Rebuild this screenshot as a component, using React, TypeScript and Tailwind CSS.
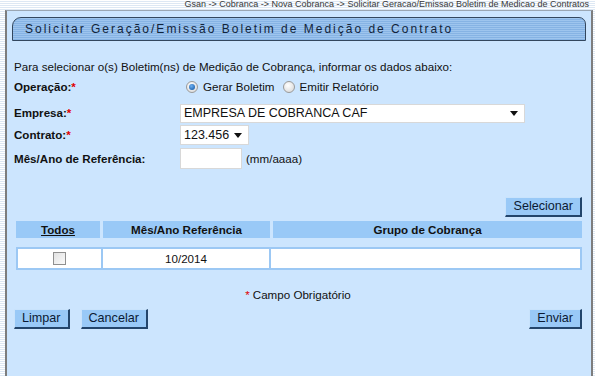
import React from "react";

const font = "font-['Liberation_Sans',Arial,sans-serif]";

const Req = () => <span className="text-[#e00000]">*</span>;

const Btn = ({ label, className = "" }: { label: string; className?: string }) => (
  <button
    className={`h-[20px] px-[7px] bg-[#99c9f7] text-[12.6px] text-[#0b1a33] leading-none border border-t-[#c9e3fc] border-l-[#c9e3fc] border-r-2 border-b-2 border-r-[#23456b] border-b-[#23456b] ${className}`}
  >
    {label}
  </button>
);

const Radio = ({ checked }: { checked?: boolean }) => (
  <span className="w-[12px] h-[12px] rounded-full border border-[#9a9a9a] bg-[radial-gradient(circle_at_40%_35%,#ffffff,#d4d4d4)] flex items-center justify-center">
    {checked && <span className="w-[6px] h-[6px] rounded-full bg-[radial-gradient(circle_at_40%_35%,#6fb0f0,#0a4f9e)]" />}
  </span>
);

const Caret = () => (
  <svg width="8" height="5" viewBox="0 0 8 5">
    <path d="M0 0h8L4 5z" fill="#111" />
  </svg>
);

export default function App() {
  return (
    <div
      className={`${font} w-[595px] h-[376px] overflow-hidden bg-[repeating-linear-gradient(180deg,#ffffff_0px,#ffffff_1px,#dde8f4_1px,#dde8f4_2px)] text-[#111]`}
    >
      <div className="h-[10px] flex justify-end items-center pr-[6px] text-[9px] text-[#3a3a3a]">
        Gsan -&gt; Cobranca -&gt; Nova Cobranca -&gt; Solicitar Geracao/Emissao Boletim de Medicao de Contratos
      </div>
      <div className="ml-[5px] w-[588px] h-[366px] bg-[#cce5fe] border-l-2 border-r-2 border-t border-l-[#7d7d7d] border-r-[#7d7d7d] border-t-[#9aa6b3] pt-[6px] px-[5px]">
        <div className="h-[24px] border border-[#33475e] rounded-tl-[9px] rounded-tr-[7px] bg-[repeating-linear-gradient(180deg,#9ec5ee_0px,#9ec5ee_1px,#86b3e4_1px,#86b3e4_2px)] flex items-center pl-[12px] text-[12px] tracking-[2px] text-[#12243a]">
          Solicitar Geração/Emissão Boletim de Medição de Contrato
        </div>

        <div className="pl-[2px] pr-[4px] text-[11.6px]">
          <div className="mt-[19px] h-[14px] flex items-center">
            Para selecionar o(s) Boletim(ns) de Medição de Cobrança, informar os dados abaixo:
          </div>
          <div className="mt-[4px] h-[18px] flex items-center">
            <div className="w-[168px] font-bold">
              Operação:<Req />
            </div>
            <div className="flex items-center pl-[4px]">
              <Radio checked />
              <span className="ml-[5px]">Gerar Boletim</span>
              <span className="ml-[8px]"><Radio /></span>
              <span className="ml-[5px]">Emitir Relatório</span>
            </div>
          </div>
          <div className="mt-[7px] h-[20px] flex items-center">
            <div className="w-[166px] font-bold">
              Empresa:<Req />
            </div>
            <div className="w-[345px] h-[19px] bg-white border border-[#d8d8d8] flex items-center justify-between pl-[3px] pr-[6px] text-[12.5px]">
              <span>EMPRESA DE COBRANCA CAF</span>
              <Caret />
            </div>
          </div>
          <div className="mt-[2px] h-[20px] flex items-center">
            <div className="w-[166px] font-bold">
              Contrato:<Req />
            </div>
            <div className="w-[69px] h-[20px] bg-white border border-[#d8d8d8] flex items-center justify-between pl-[3px] pr-[6px] text-[12.5px]">
              <span>123.456</span>
              <Caret />
            </div>
          </div>
          <div className="mt-[3px] h-[21px] flex items-center">
            <div className="w-[166px] font-bold">Mês/Ano de Referência:</div>
            <div className="w-[62px] h-[21px] bg-white border border-[#d8d8d8]" />
            <span className="ml-[4px]">(mm/aaaa)</span>
          </div>

          <div className="mt-[28px] flex justify-end">
            <Btn label="Selecionar" />
          </div>

          <div className="mt-[4px] ml-[2px]">
            <div className="flex gap-[3px] h-[17px] font-bold">
              <div className="w-[84px] bg-[#99c9f7] flex items-center justify-center underline">Todos</div>
              <div className="w-[167px] bg-[#99c9f7] flex items-center justify-center">Mês/Ano Referência</div>
              <div className="flex-1 bg-[#99c9f7] flex items-center justify-center">Grupo de Cobrança</div>
            </div>
            <div className="mt-[9px] flex h-[23px] border-2 border-[#9cc8f4] bg-white">
              <div className="w-[85px] flex items-center justify-center border-r-2 border-[#9cc8f4]">
                <span className="w-[13px] h-[13px] border border-[#8f8f8f] bg-[linear-gradient(135deg,#e2e2e2,#fafafa)]" />
              </div>
              <div className="w-[168px] flex items-center justify-center border-r-2 border-[#9cc8f4]">10/2014</div>
              <div className="flex-1" />
            </div>
          </div>

          <div className="mt-[18px] h-[14px] flex items-center justify-center">
            <Req />
            <span className="ml-[3px]">Campo Obrigatório</span>
          </div>

          <div className="mt-[7px] flex items-center">
            <Btn label="Limpar" />
            <Btn label="Cancelar" className="ml-[11px]" />
            <Btn label="Enviar" className="ml-auto" />
          </div>
        </div>
      </div>
    </div>
  );
}
